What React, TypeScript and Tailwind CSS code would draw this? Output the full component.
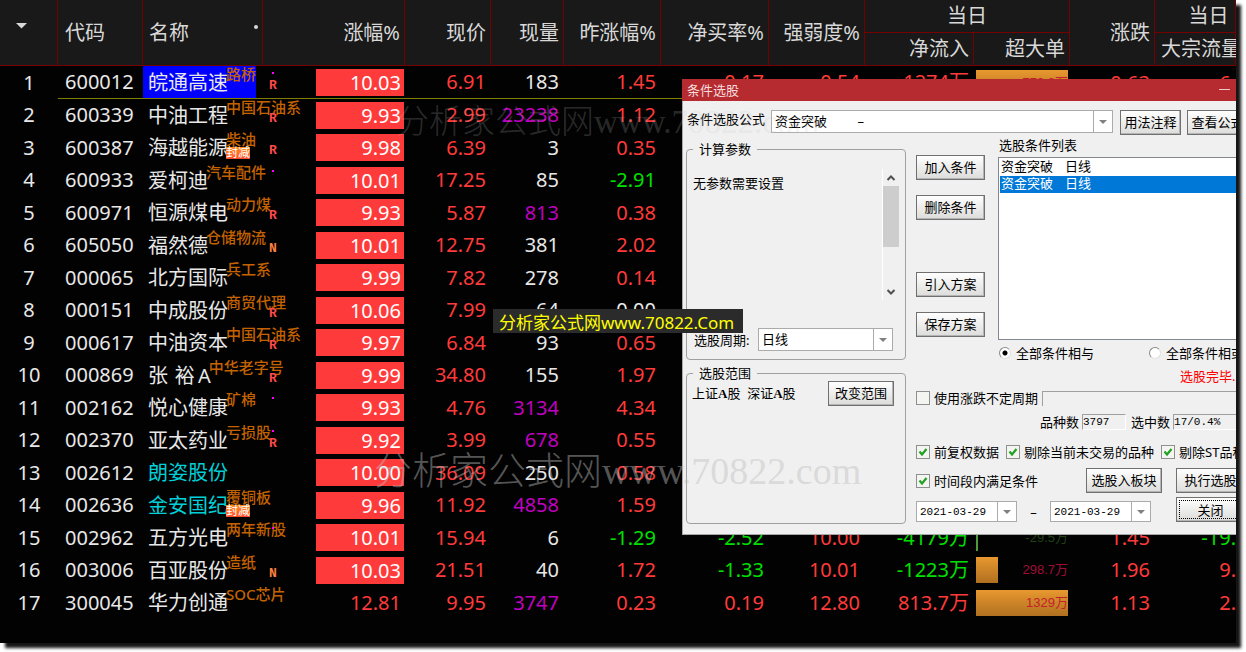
import type { ReactNode } from "react";
import clsx from "clsx";

type Stock = {
  code: string;
  name: string;
  tag?: string;
  badge?: string;
  dot?: boolean;
  mark?: "R" | "N";
  cyan?: boolean;
  rise: string;
  price: string;
  volume: string;
  prev: string;
  buyRate?: string;
  strength?: string;
  inflow?: string;
  big?: string;
  bigBar?: number;
  change?: string;
  bulk?: string;
};

const stocks: Stock[] = [
  { code: "600012", name: "皖通高速", tag: "路桥", dot: true, mark: "R", rise: "10.03", price: "6.91", volume: "183", prev: "1.45", buyRate: "0.17", strength: "0.54", inflow: "1274万", big: "770.8万", bigBar: 100, change: "0.63", bulk: "6." },
  { code: "600339", name: "中油工程", tag: "中国石油系", mark: "R", rise: "9.93", price: "2.99", volume: "23238", prev: "1.12" },
  { code: "600387", name: "海越能源", tag: "柴油", badge: "封减", mark: "R", rise: "9.98", price: "6.39", volume: "3", prev: "0.35" },
  { code: "600933", name: "爱柯迪", tag: "汽车配件", dot: true, rise: "10.01", price: "17.25", volume: "85", prev: "-2.91" },
  { code: "600971", name: "恒源煤电", tag: "动力煤", mark: "R", rise: "9.93", price: "5.87", volume: "813", prev: "0.38" },
  { code: "605050", name: "福然德", tag: "仓储物流", mark: "N", rise: "10.01", price: "12.75", volume: "381", prev: "2.02" },
  { code: "000065", name: "北方国际", tag: "兵工系", rise: "9.99", price: "7.82", volume: "278", prev: "0.14" },
  { code: "000151", name: "中成股份", tag: "商贸代理", mark: "R", rise: "10.06", price: "7.99", volume: "64", prev: "0.00" },
  { code: "000617", name: "中油资本", tag: "中国石油系", mark: "R", rise: "9.97", price: "6.84", volume: "93", prev: "0.65" },
  { code: "000869", name: "张\u2004裕\u2009A", tag: "中华老字号", mark: "R", rise: "9.99", price: "34.80", volume: "155", prev: "1.97" },
  { code: "002162", name: "悦心健康", tag: "矿棉", dot: true, rise: "9.93", price: "4.76", volume: "3134", prev: "4.34" },
  { code: "002370", name: "亚太药业", tag: "亏损股", dot: true, mark: "R", rise: "9.92", price: "3.99", volume: "678", prev: "0.55" },
  { code: "002612", name: "朗姿股份", cyan: true, rise: "10.00", price: "36.09", volume: "250", prev: "0.58" },
  { code: "002636", name: "金安国纪", tag: "覆铜板", badge: "封减", cyan: true, rise: "9.96", price: "11.92", volume: "4858", prev: "1.59" },
  { code: "002962", name: "五方光电", tag: "两年新股", dot: true, rise: "10.01", price: "15.94", volume: "6", prev: "-1.29", buyRate: "-2.52", strength: "10.00", inflow: "-4179万", big: "-29.5万", bigBar: 2, change: "1.45", bulk: "-19." },
  { code: "003006", name: "百亚股份", tag: "造纸", mark: "N", rise: "10.03", price: "21.51", volume: "40", prev: "1.72", buyRate: "-1.33", strength: "10.01", inflow: "-1223万", big: "298.7万", bigBar: 24, change: "1.96", bulk: "9." },
  { code: "300045", name: "华力创通", tag: "SOC芯片", rise: "12.81", price: "9.95", volume: "3747", prev: "0.23", buyRate: "0.19", strength: "12.80", inflow: "813.7万", big: "1329万", bigBar: 100, change: "1.13", bulk: "2." },
];

const purpleVolumes = ["23238", "813", "3134", "678", "4858", "3747"];

function signColor(value = "") {
  if (value === "0.00") return "text-[#e8e8e8]";
  return value.startsWith("-") ? "text-[#00e000]" : "text-[#ff3a3a]";
}

function Num({ children, color, line, flush }: { children?: string; color: string; line?: boolean; flush?: boolean }) {
  return (
    <td className={clsx("text-right", color, line && "border-b border-[#7f7f00]", flush ? "pr-0" : "pr-[5px]")}>
      {children}
    </td>
  );
}

function Head({ children, className, ...rest }: { children?: ReactNode; className?: string; rowSpan?: number; colSpan?: number }) {
  return (
    <th {...rest} className={clsx("border-r border-b border-[#740000] font-normal whitespace-nowrap", className)}>
      {children}
    </th>
  );
}

function StockRow({ stock, index }: { stock: Stock; index: number }) {
  const active = index === 0;
  const limit = index < 16;
  const line = active && "border-b border-[#7f7f00]";
  const falling = stock.big?.startsWith("-");
  return (
    <tr className="odd:h-[33px] even:h-8">
      <td className="text-center">{index + 1}</td>
      <td className={clsx("pl-[7px]", line)}>{stock.code}</td>
      <td className={clsx("align-top", line)}>
        <div className={clsx("flex h-8 w-[113px] items-center pl-[5px] whitespace-nowrap", active && "bg-[#0000ff]")}>
          <span className={clsx("pt-0.5", stock.cyan && "text-[#00d0d8]")}>{stock.name}</span>
          <span className="-ml-0.5 flex flex-col items-start self-start text-[15px] leading-4 font-medium text-[#c46200]">
            {stock.tag}
            {stock.badge && (
              <span className="h-3 bg-linear-to-b from-[#ff8a1c] to-[#ff4a2c] text-[12px] leading-3 font-normal text-white">
                {stock.badge}
              </span>
            )}
          </span>
        </div>
      </td>
      <td className={clsx(line)}>
        <div className="flex h-[27px] justify-between pr-px pl-1">
          <div className="flex w-3 flex-col items-center font-['Liberation_Mono',monospace] text-[13px] leading-3 font-bold">
            <span className={clsx("mt-[3px] mb-1.5 size-0.5", stock.dot && "bg-[#f0f]")} />
            <span className={stock.mark === "N" ? "text-[#ff8040]" : "text-[#ff4a4a]"}>{stock.mark}</span>
          </div>
          <div className={clsx("w-[88px] pr-[3px] text-right leading-[27px]", limit ? "bg-[#ff3a3a] text-white" : "text-[#ff3a3a]")}>
            {stock.rise}
          </div>
        </div>
      </td>
      <Num line={active} color="text-[#ff3a3a]">{stock.price}</Num>
      <Num line={active} color={purpleVolumes.includes(stock.volume) ? "text-[#c000c0]" : "text-[#e8e8e8]"}>
        {stock.volume}
      </Num>
      <Num line={active} color={signColor(stock.prev)}>{stock.prev}</Num>
      <Num line={active} color={signColor(stock.buyRate)}>{stock.buyRate}</Num>
      <Num line={active} color={signColor(stock.strength)}>{stock.strength}</Num>
      <Num line={active} color={signColor(stock.inflow)}>{stock.inflow}</Num>
      <td className="px-0.5">
        {stock.big && (
          <div className="grid h-[26px] items-center">
            <div
              className={clsx(
                "col-start-1 row-start-1 h-full",
                falling ? "bg-[#4f9a3c]" : "bg-linear-to-b from-[#e8982f] to-[#b07020]"
              )}
              style={{ width: `${stock.bigBar}%` }}
            />
            <span
              className={clsx(
                "col-start-1 row-start-1 text-right font-['Liberation_Sans','Noto_Sans_CJK_SC',sans-serif] text-[13px] leading-4",
                falling ? "text-[#1f4210]" : limit && !active ? "text-[#a00c38]" : "text-[#c4202c]"
              )}
            >
              {stock.big}
            </span>
          </div>
        )}
      </td>
      <Num color={signColor(stock.change)}>{stock.change}</Num>
      <Num flush color={signColor(stock.bulk)}>{stock.bulk}</Num>
    </tr>
  );
}

function QuoteTable() {
  return (
    <table className="w-full table-fixed border-separate border-spacing-0 text-xl leading-7 text-[#e8e8e8]">
      <colgroup>
        <col className="w-[58px]" />
        <col className="w-[85px]" />
        <col className="w-[120px]" />
        <col className="w-[142px]" />
        <col className="w-[86px]" />
        <col className="w-[73px]" />
        <col className="w-[97px]" />
        <col className="w-[108px]" />
        <col className="w-[96px]" />
        <col className="w-[109px]" />
        <col className="w-[96px]" />
        <col className="w-[85px]" />
        <col />
      </colgroup>
      <thead className="bg-[#191919] text-[#d8d8d8]">
        <tr className="h-[33px]">
          <Head rowSpan={2} className="pl-4 align-top">
            <svg viewBox="0 0 11 6" className="mt-[23px] h-1.5 w-[11px] fill-[#d8d8d8]">
              <path d="M0 0h11L5.500 5.500z" />
            </svg>
          </Head>
          <Head rowSpan={2} className="pl-[7px] text-left">代码</Head>
          <Head rowSpan={2} className="pr-1 pl-[6px] text-left">
            <div className="flex justify-between">
              名称
              <span className="mt-1.5 size-1 rounded-full bg-[#d8d8d8]" />
            </div>
          </Head>
          <Head rowSpan={2} className="pr-1 text-right">涨幅%</Head>
          <Head rowSpan={2} className="pr-1 text-right">现价</Head>
          <Head rowSpan={2} className="pr-1 text-right">现量</Head>
          <Head rowSpan={2} className="pr-1 text-right">昨涨幅%</Head>
          <Head rowSpan={2} className="pr-1 text-right">净买率%</Head>
          <Head rowSpan={2} className="pr-1 text-right">强弱度%</Head>
          <Head colSpan={2}>当日</Head>
          <Head rowSpan={2} className="pr-1 text-right">涨跌</Head>
          <Head className="pl-[27px]">当日</Head>
        </tr>
        <tr className="h-[33px]">
          <Head className="pr-1 text-right">净流入</Head>
          <Head className="pr-1 text-right">超大单</Head>
          <Head className="pl-[6px] text-left">大宗流量</Head>
        </tr>
      </thead>
      <tbody>
        {stocks.map((stock, i) => (
          <StockRow key={stock.code} stock={stock} index={i} />
        ))}
      </tbody>
    </table>
  );
}

function Button({ children, className, focused }: { children: ReactNode; className: string; focused?: boolean }) {
  return (
    <button
      type="button"
      className={clsx(
        "h-[25px] shrink-0 border border-[#707070] bg-linear-to-b from-white to-[#dcdcda] p-0.5 whitespace-nowrap shadow-[inset_-1px_-1px_0_#b4b4b4]",
        className
      )}
    >
      <span className={clsx("flex h-full items-center justify-center", focused ? "border border-dotted border-black" : "pb-0.5")}>
        {children}
      </span>
    </button>
  );
}

function Arrow() {
  return (
    <span className="pointer-events-none flex w-[19px] items-center justify-center border-l border-[#ababab]">
      <svg viewBox="0 0 8 4" className="h-1 w-2 fill-[#808080]">
        <path d="M0 0h8L4 4z" />
      </svg>
    </span>
  );
}

function Combo({ label, value, className }: { label: string; value: string; className: string }) {
  return (
    <span className={clsx("flex h-[23px] shrink-0 border border-[#ababab] bg-white", className)}>
      <select aria-label={label} className="min-w-0 flex-1 appearance-none pb-0.5 pl-[3px] whitespace-pre">
        <option>{value}</option>
      </select>
      <Arrow />
    </span>
  );
}

function DateBox({ label }: { label: string }) {
  return (
    <span className="flex h-[21px] w-[101px] border border-[#ababab] bg-white">
      <input
        aria-label={label}
        defaultValue="2021-03-29"
        className="w-0 min-w-0 flex-1 pl-[3px] font-['Liberation_Mono',monospace] text-[11px]"
      />
      <Arrow />
    </span>
  );
}

function Check({ label, checked }: { label: string; checked?: boolean }) {
  return (
    <label className="flex shrink-0 items-center gap-1 whitespace-nowrap">
      <span className="grid size-3.5 place-items-center border border-[#8e8f8f] bg-[#f4f4f0]">
        <input type="checkbox" defaultChecked={checked} className="peer col-start-1 row-start-1 size-3 appearance-none" />
        <svg viewBox="0 0 10 10" className="pointer-events-none invisible col-start-1 row-start-1 size-2.5 peer-checked:visible">
          <path d="M1.500 4.500L4 7.500L8.500 2" fill="none" stroke="#21a121" strokeWidth="2.200" />
        </svg>
      </span>
      {label}
    </label>
  );
}

function Radio({ label, checked }: { label: string; checked?: boolean }) {
  return (
    <label className="flex items-center gap-[5px] whitespace-nowrap">
      <input
        type="radio"
        name="logic"
        defaultChecked={checked}
        className="size-3 appearance-none rounded-full border border-[#8a8a8a] border-r-[#e0e0e0] border-b-[#e0e0e0] bg-white checked:bg-[radial-gradient(circle,#000_2px,#fff_3px)]"
      />
      {label}
    </label>
  );
}

function Chevron({ down }: { down?: boolean }) {
  return (
    <svg viewBox="0 0 10 6" className="h-1.5 w-2.5">
      <path d={down ? "M1.500 1L5 4.500L8.500 1" : "M1.500 5L5 1.500L8.500 5"} fill="none" stroke="#505050" strokeWidth="2" />
    </svg>
  );
}

function FilterDialog() {
  return (
    <section className="absolute top-[79px] left-[682px] w-[600px] border-b border-l border-[#a8a8a8] bg-[#f0f0f0] text-[13px] leading-4 text-black">
      <h2 className="-ml-px flex h-[22px] items-center bg-[#b52b30] pb-px pl-[5px] text-[#f4dcdc]">
        条件选股
        <span className="ml-[480px] h-px w-[11px] bg-[#f0c8c8]" />
      </h2>
      <div className="flex items-start pt-[9px] pl-1">
        <span className="w-[84px] leading-[18px] whitespace-nowrap">条件选股公式</span>
        <Combo label="条件选股公式" value={"资金突破\u00a0\u00a0\u00a0\u00a0\u00a0\u00a0\u00a0\u00a0\u00a0–"} className="w-[342px]" />
        <Button className="ml-[7px] w-[61px]">用法注释</Button>
        <Button className="ml-[6px] w-[61px]">查看公式</Button>
      </div>

      <div className="flex items-start gap-2.5 pl-[3px]">
        <div className="flex w-[220px] shrink-0 flex-col gap-[5px] pt-1.5 pb-2.5">
          <fieldset className="h-[219px] rounded-sm border border-[#a0a0a0]">
            <legend className="ml-[6px] px-[6px]">计算参数</legend>
            <div className="mt-3 flex h-[131px] justify-between px-[6px]">
              <p className="pt-1.5">无参数需要设置</p>
              <div className="flex w-[17px] flex-col items-center border-l border-white">
                <div className="flex h-[17px] items-center">
                  <Chevron />
                </div>
                <div className="h-[61px] w-full bg-[#cdcdcd]" />
                <div className="mt-auto flex h-[17px] items-center">
                  <Chevron down />
                </div>
              </div>
            </div>
            <div className="mt-7 flex items-center pl-[7px]">
              <span className="w-[64px] whitespace-nowrap">选股周期:</span>
              <Combo label="选股周期" value="日线" className="w-[135px]" />
            </div>
          </fieldset>
          <fieldset className="h-[159px] rounded-sm border border-[#a0a0a0]">
            <legend className="ml-[6px] px-[6px]">选股范围</legend>
            <div className="flex items-center justify-between pr-[11px] pl-[5px]">
              <span className="whitespace-pre">
                上证<b className="font-['Liberation_Serif',serif]">A</b>股{"  "}深证
                <b className="font-['Liberation_Serif',serif]">A</b>股
              </span>
              <Button className="w-[66px]">改变范围</Button>
            </div>
          </fieldset>
        </div>

        <div className="min-w-0 flex-1">
          <div className="flex gap-[13px]">
            <div className="flex flex-col pt-5">
              <Button className="w-[69px]">加入条件</Button>
              <Button className="mt-[15px] w-[69px]">删除条件</Button>
              <Button className="mt-[52px] w-[69px]">引入方案</Button>
              <Button className="mt-[15px] w-[69px]">保存方案</Button>
            </div>
            <div className="flex-1 pt-0.5">
              <h3 className="pl-px">选股条件列表</h3>
              <ul className="mt-1 h-[183px] border border-[#828790] bg-white p-px leading-[15px]">
                <li className="flex h-[17px] gap-3 pl-px">
                  <span>资金突破</span>
                  <span>日线</span>
                </li>
                <li className="flex h-[17px] gap-3 bg-[#0078d7] pl-px text-white">
                  <span>资金突破</span>
                  <span>日线</span>
                </li>
              </ul>
              <div className="mt-[5px] flex gap-[55px] pl-px">
                <Radio label="全部条件相与" checked />
                <Radio label="全部条件相或" />
              </div>
              <p className="mt-[7px] pl-[182px] text-[#f00]">选股完毕.</p>
            </div>
          </div>

          <div className="mt-1.5 flex items-center gap-1">
            <Check label="使用涨跌不定周期" />
            <div className="h-[15px] flex-1 border-t border-l border-[#a0a0a0]" />
          </div>
          <div className="mt-2 flex items-center gap-[3px] pl-[124px]">
            <label htmlFor="total" className="whitespace-nowrap">品种数</label>
            <input
              id="total"
              readOnly
              value="3797"
              className="mr-0.5 h-4 w-[44px] border border-t-[#a0a0a0] border-r-white border-b-white border-l-[#a0a0a0] font-['Liberation_Mono',monospace] text-[11px]"
            />
            <label htmlFor="hit" className="whitespace-nowrap">选中数</label>
            <input
              id="hit"
              readOnly
              value="17/0.4%"
              className="h-4 w-20 border border-t-[#a0a0a0] border-r-white border-b-white border-l-[#a0a0a0] font-['Liberation_Mono',monospace] text-[11px]"
            />
          </div>
          <div className="mt-3.5 flex gap-[7px]">
            <Check label="前复权数据" checked />
            <Check label="剔除当前未交易的品种" checked />
            <Check label="剔除ST品种" checked />
          </div>
          <div className="mt-2 flex items-center">
            <div className="w-[170px]">
              <Check label="时间段内满足条件" checked />
            </div>
            <Button className="w-[76px]">选股入板块</Button>
            <Button className="ml-3.5 w-[69px]">执行选股</Button>
          </div>
          <div className="mt-1 flex items-end">
            <DateBox label="开始日期" />
            <span className="w-[33px] pb-0.5 text-center">–</span>
            <DateBox label="结束日期" />
            <Button className="ml-[25px] w-[69px]" focused>关闭</Button>
          </div>
        </div>
      </div>
    </section>
  );
}

export default function App() {
  return (
    <div className="bg-white pr-2.5 pb-[9px] font-['Noto_Sans','Noto_Sans_CJK_SC',sans-serif]">
      <main className="relative overflow-hidden bg-[#020202] pb-6 shadow-[5px_5px_3px_#151515]">
        <QuoteTable />
        <FilterDialog />
        <p className="pointer-events-none absolute top-[102px] left-[396px] flex items-center font-['Liberation_Serif','Noto_Sans_CJK_SC',serif] text-[33px] leading-10 font-light whitespace-nowrap text-[rgba(200,200,200,0.21)]">
          分析家公式网www.70822.com
        </p>
        <p className="pointer-events-none absolute top-[449px] left-[374px] flex items-center font-['Liberation_Serif','Noto_Sans_CJK_SC',serif] text-[38px] leading-11 font-light whitespace-nowrap text-[rgba(190,190,190,0.46)]">
          分析家公式网www.70822.com
        </p>
        <p className="absolute top-[309px] left-[493px] h-6 w-[250px] bg-[#2b2b2b] pl-[6px] text-[17px] leading-7 whitespace-nowrap text-[#ff0]">
          分析家公式网www.70822.Com
        </p>
      </main>
    </div>
  );
}
